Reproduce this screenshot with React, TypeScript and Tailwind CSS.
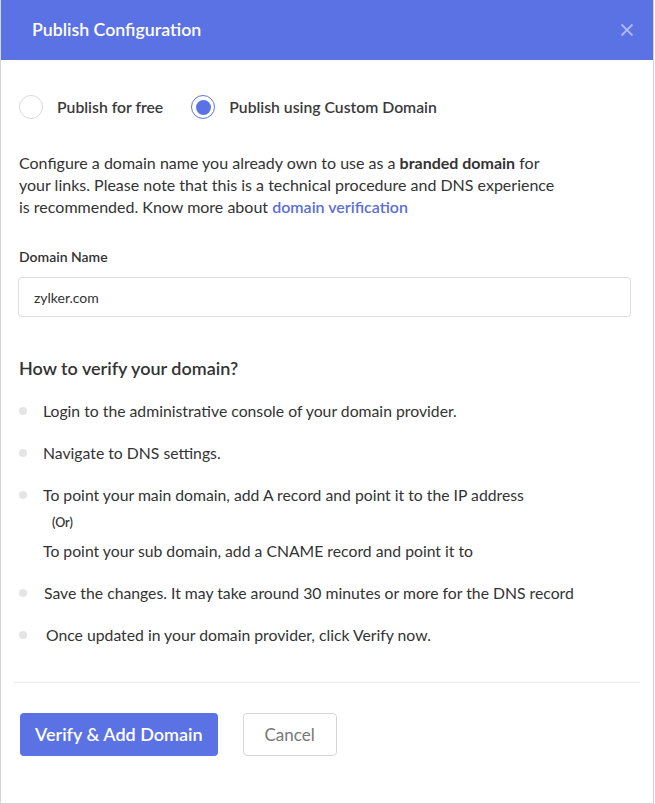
import { useState } from "react";

const steps = [
  "Login to the administrative console of your domain provider.",
  "Navigate to DNS settings.",
  "__record__",
  "Save the changes. It may take around 30 minutes or more for the DNS record",
  "Once updated in your domain provider, click Verify now.",
];

const Radio = ({ checked, label, onClick }: { checked: boolean; label: string; onClick: () => void }) => (
  <button onClick={onClick} className="flex items-center gap-[14px]">
    <span
      className={
        checked
          ? "w-6 h-6 rounded-full border border-[#5b72e5] flex items-center justify-center"
          : "w-6 h-6 rounded-full border border-[#d9d9d9]"
      }
    >
      {checked && <span className="w-[15px] h-[15px] rounded-full bg-[#5b72e5]" />}
    </span>
    <span className="text-[15.75px] font-semibold text-[#3a3a3a]">{label}</span>
  </button>
);

const App = () => {
  const [mode, setMode] = useState("custom");
  const [domain, setDomain] = useState("zylker.com");

  return (
    <div className="w-[654px] h-[804px] bg-white border border-t-0 border-[#d4d4d4] font-['Lato',sans-serif] text-[#333]">
      {/* Header */}
      <div className="h-[60px] bg-[#5b72e5] pl-[31px] pr-[19px] flex items-center justify-between">
        <h1 className="text-[17.75px] font-semibold text-white -mt-px">Publish Configuration</h1>
        <button className="text-[#aeb8f3]">
          <svg width="14" height="14" viewBox="0 0 14 14" stroke="currentColor" strokeWidth="1.8" fill="none">
            <path d="M1.5 1.5 L12.5 12.5 M12.5 1.5 L1.5 12.5" />
          </svg>
        </button>
      </div>

      {/* Body */}
      <div className="px-[18px] pt-[35px]">
        <div className="flex items-center gap-[28px]">
          <Radio checked={mode === "free"} label="Publish for free" onClick={() => setMode("free")} />
          <Radio checked={mode === "custom"} label="Publish using Custom Domain" onClick={() => setMode("custom")} />
        </div>

        <p className="mt-[33px] w-[545px] text-[16px] leading-[22px]">
          Configure a domain name you already own to use as a <b className="font-bold">branded domain</b> for your
          links. Please note that this is a technical procedure and DNS experience is recommended. Know more about{" "}
          <a href="#" className="font-semibold text-[#5b6fd6]">domain verification</a>
        </p>

        <label className="block mt-[30px] text-[14px] leading-[18px] font-semibold">Domain Name</label>
        <input
          value={domain}
          onChange={(e) => setDomain(e.target.value)}
          className="mt-[11px] w-[613px] h-10 -ml-px px-[15px] border border-[#dedede] rounded text-[14px] text-[#333] outline-none"
        />

        <h2 className="mt-[39px] text-[18px] leading-6 font-semibold">How to verify your domain?</h2>

        <ul className="mt-[20px] flex flex-col gap-[20px] text-[15.75px] leading-[22px]">
          {steps.map((s, i) => (
            <li key={s} className="flex items-start">
              <span className="mt-[7px] w-[8px] h-[8px] rounded-full bg-[#e5e5e5] shrink-0" />
              {s === "__record__" ? (
                <div className="ml-[16px] flex flex-col gap-[6px]">
                  <span>To point your main domain, add A record and point it to the IP address</span>
                  <span className="pl-[9px] text-[12.5px] font-semibold">(Or)</span>
                  <span>To point your sub domain, add a CNAME record and point it to</span>
                </div>
              ) : (
                <span className={i === 4 ? "ml-[19px]" : i === 3 ? "ml-[17px]" : "ml-[16px]"}>{s}</span>
              )}
            </li>
          ))}
        </ul>
      </div>

      {/* Footer */}
      <div className="mt-[36px] mx-[13px] border-t border-[#e8e8e8] pt-[30px] px-[6px] flex items-center gap-[25px]">
        <button className="h-[43px] px-[15px] rounded bg-[#5b72e5] text-white text-[18px] font-semibold">
          Verify &amp; Add Domain
        </button>
        <button className="h-[43px] w-[94px] rounded border border-[#d6d6d6] text-[#777] text-[17px]">Cancel</button>
      </div>
    </div>
  );
};

export default App;
